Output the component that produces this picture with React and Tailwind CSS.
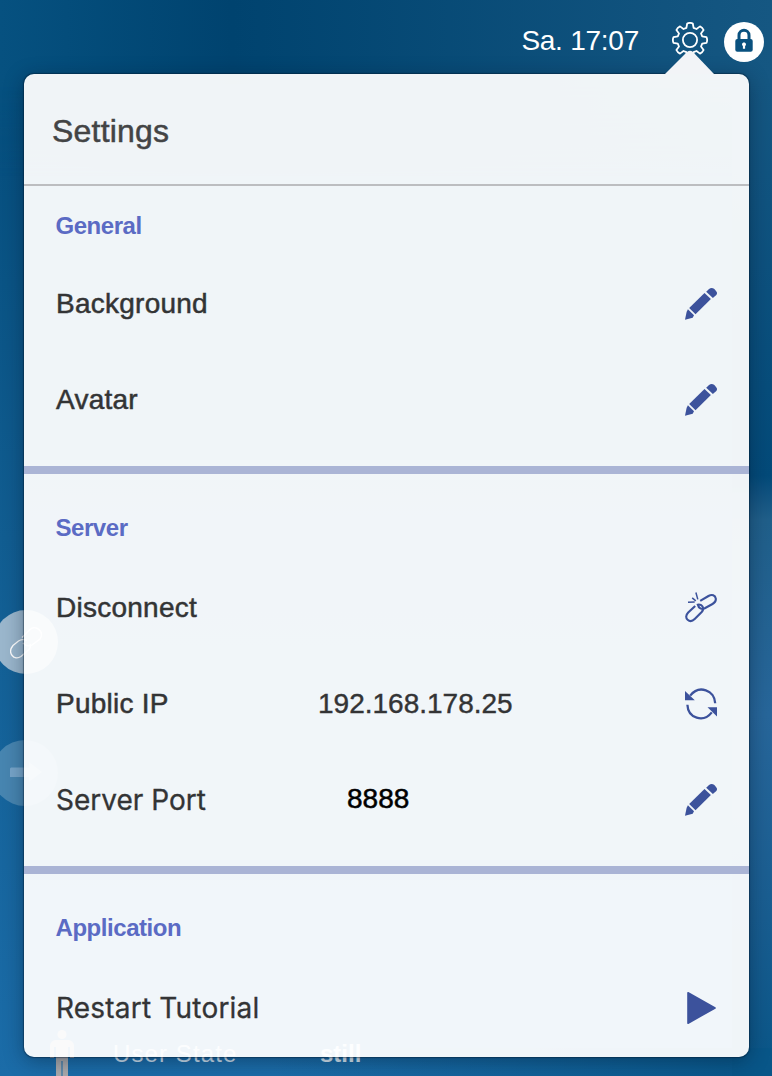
import React from "react";

function Pencil() {
  return (
    <svg className="h-8 w-8 shrink-0" viewBox="0 0 32 32" fill="#3c529c">
      <path d="M4.2 20.1 19.5 4.9 25.9 11 10.5 26.2Z" />
      <path d="M21.2 3.7 24 1Q26.7-1 29.4 1.1L31 2.9Q32.9 5.1 31.3 7L27.9 10.1Z" />
      <path d="M2.9 21.3 9 27.3 7.7 29.8 0 31.7 1.6 24Z" />
    </svg>
  );
}

function BrokenLink() {
  return (
    <svg className="h-8 w-8 shrink-0" viewBox="0 0 32 32" fill="none" stroke="#3c529c" strokeWidth="2.1">
      <path d="M15.2 8.8 23.5 4C27 2 30.3 3.2 30.8 6.6C31.1 9.3 29.8 10.8 27.5 12L19.8 16.2C16.5 17.7 13.6 16.2 13 13" />
      <path d="M10.2 14 3.2 20.6C.6 23.3 .7 26.2 2.6 27.8C4.8 29.7 7.4 29.3 9.7 27L16.7 20C18.9 17.6 18.5 14.6 16.2 13.2Q14 12 11.8 12.9" />
      <path d="M10.9 .5 12.8 7.4M3 10.3 9.7 10.1M7.2 5.8 10.8 8.8" strokeWidth="1.5" />
    </svg>
  );
}

function Refresh() {
  return (
    <svg className="h-8 w-8 shrink-0" viewBox="0 0 32 32" fill="none" stroke="#3c529c" strokeWidth="2.3">
      <path d="M5.2 7.6C14-3.7 29.8 2.2 30.2 15.3" />
      <path d="M2.4 16.8C3 30.5 18.5 35 26.8 24.4" />
      <path d="M0 3V12.3H9.8ZM32 28.5V19.3H22.5Z" fill="#3c529c" stroke="none" />
    </svg>
  );
}

function Play() {
  return (
    <svg className="h-8 w-8 shrink-0" viewBox="0 0 32 32">
      <path d="M3 .8 30 16 3 31.2Z" fill="#3c529c" stroke="#3c529c" strokeWidth="1.6" strokeLinejoin="round" />
    </svg>
  );
}

function Gear() {
  return (
    <svg className="h-9 w-9 shrink-0" viewBox="-18 -18 36 36" fill="none" stroke="#fff" strokeWidth="1.8" strokeLinejoin="round">
      <path d="M-2.8-16.5Q0-17.8 2.8-16.5L3.6-12.2 6.5-11 10-13.6Q12.5-12.5 13.6-10L11-6.5 12.2-3.6 16.5-2.8Q17.8 0 16.5 2.8L12.2 3.6 11 6.5 13.6 10Q12.5 12.5 10 13.6L6.5 11 3.6 12.2 2.8 16.5Q0 17.8-2.8 16.5L-3.6 12.2-6.5 11-10 13.6Q-12.5 12.5-13.6 10L-11 6.5-12.2 3.6-16.5 2.8Q-17.8 0-16.5-2.8L-12.2-3.6-11-6.5-13.6-10Q-12.5-12.5-10-13.6L-6.5-11-3.6-12.2Z" />
      <circle r="7.1" />
    </svg>
  );
}

function Lock() {
  return (
    <div className="flex h-10 w-10 shrink-0 items-center justify-center rounded-full bg-white">
      <svg className="-mt-1 h-6 w-5" viewBox="0 0 20 24">
        <path d="M5 12V7.3C5 .7 15 .7 15 7.3V12" fill="none" stroke="#09517f" strokeWidth="3" />
        <rect x="1.3" y="11" width="17.4" height="12.7" rx="2" fill="#09517f" />
        <path d="M8.9 20.8V18Q7.9 17.2 8 16.2C8.2 13.8 11.8 13.8 12 16.2Q12.1 17.2 11.1 18V20.8Z" fill="#fff" />
      </svg>
    </div>
  );
}

function Row({ label, tone, value, children }) {
  return (
    <div className="flex h-24 items-center pr-8 pl-[31px] text-[28px] text-[#333435]">
      <div className="w-[263px] whitespace-nowrap"><span className={tone}>{label}</span></div>
      <div className="flex-1">{value}</div>
      {children}
    </div>
  );
}

const heading = "pl-[31.5px] text-2xl leading-8 font-bold tracking-[-0.45px] text-[#5b6bc4]";
const label = "relative left-px tracking-[0.25px] [-webkit-text-stroke:0.5px_#333435]";
const wideLabel = "relative left-px font-[Inter,sans-serif] [-webkit-text-stroke:0.3px_#333435]";

export default function App() {
  return (
    <div className="relative isolate h-[1076px] w-[772px] overflow-hidden bg-linear-to-b from-[#034a78] via-[#115d91] to-[#1b6ca8] font-['Liberation_Sans',Arial,sans-serif]">
      <div className="absolute inset-x-0 top-0 -z-20 h-44 bg-linear-to-r from-[#065180] via-[#00436f] via-30% to-[#155782] mask-b-from-45% mask-b-to-100%" />
      <div className="absolute top-20 right-0 -z-20 h-[440px] w-10 bg-linear-to-b from-[#155782] via-[#034a79] via-90% to-[#205f8a]" />
      <div className="absolute top-[520px] right-0 -z-20 h-[556px] w-10 bg-linear-to-b from-[#205f8a] via-[#27669a] via-35% to-[#085688]" />
      <div className="absolute right-0 bottom-0 -z-20 h-7 w-[500px] bg-linear-to-r from-transparent to-[#085688]" />

      <div className="absolute top-[610px] left-[-6px] -z-10 h-16 w-16 rounded-full bg-[#9ab6cc]">
        <svg className="absolute top-[17px] left-4 h-8 w-8" viewBox="0 0 32 32" fill="none" stroke="#fff" strokeWidth="1.3">
          <path d="M12 10.5 20 2.5C25-2.5 35 4 30 12L22 18Q17 20.5 13 16" />
          <path d="M17 13.5Q12 11.5 8.5 14L3 18.5C-3 26 4 34 11 29.5L19 22.5Q21 20.5 20 17" />
        </svg>
      </div>
      <div className="absolute top-[740px] left-[-8px] -z-10 h-[66px] w-[66px] rounded-full bg-[#4785b0]">
        <svg className="absolute top-[17px] left-[18px] h-8 w-8" viewBox="0 0 32 32" fill="#77a5c9">
          <path d="M1 10.5H19V5L32 15 19 25V20H0V11.5Z" />
        </svg>
      </div>
      <svg className="absolute top-[1030px] left-[50px] -z-10 h-[50px] w-6" viewBox="0 0 24 50" fill="#aaa9ab">
        <circle cx="12" cy="4.5" r="4.5" />
        <path d="M5 10H19Q23 11 24 15V28H20V17H18V50H12.5V31H11.5V50H6V17H4V28H0V15Q1 11 5 10Z" />
      </svg>
      <div className="absolute top-[1040px] left-[113px] -z-10 text-2xl leading-7 tracking-[1.1px] text-[#cddfed]">User State</div>
      <div className="absolute top-[1040px] left-[320px] -z-10 text-2xl leading-7 font-bold text-[#dae8f2]">still</div>

      <header className="flex h-[74px] items-start justify-end pr-2">
        <div className="mt-[25px] mr-[33px] text-[28px] leading-8 text-white"><span className="tracking-[-0.25px]">Sa. 17:07</span></div>
        <div className="mt-[22px] mr-4"><Gear /></div>
        <div className="mt-[22px]"><Lock /></div>
      </header>
      <main className="relative ml-6 h-[983px] w-[725px] rounded-[10px] bg-white/94 shadow-[0_0_1px_1px_rgba(0,20,40,0.4),0_4px_20px_rgba(0,20,40,0.4)]">
        <svg className="absolute -top-6 left-[641px] h-6 w-[50px]" viewBox="0 0 50 24">
          <path d="M0 24 22 2Q25-.5 28 2L49 24Z" fill="#f2f4f7" />
        </svg>
        <h1 className="flex h-[112px] items-center border-b-2 border-[#bcbdc0] pt-1 pl-[28px] text-[32px] text-[#434445]"><span className="tracking-[0.2px] [-webkit-text-stroke:0.5px_#434445]">Settings</span></h1>
        <section className="h-[280px] pt-6">
          <h2 className={heading}>General</h2>
          <div className="mt-[14px]">
            <Row label="Background" tone={label}><Pencil /></Row>
            <Row label="Avatar" tone={label}><Pencil /></Row>
          </div>
        </section>
        <section className="h-[400px] border-t-8 border-[#aab4d5] pt-[38px]">
          <h2 className={heading}>Server</h2>
          <div className="mt-4">
            <Row label="Disconnect" tone={label}><BrokenLink /></Row>
            <Row label="Public IP" tone={label} value={<span className="[-webkit-text-stroke:0.4px_#333435]">192.168.178.25</span>}><Refresh /></Row>
            <Row label="Server Port" tone={wideLabel} value={<span className="relative -top-px left-[29px] text-black [-webkit-text-stroke:0.5px_#000]">8888</span>}><Pencil /></Row>
          </div>
        </section>
        <section className="border-t-8 border-[#aab4d5] pt-[38px]">
          <h2 className={heading}>Application</h2>
          <div className="mt-4">
            <Row label="Restart Tutorial" tone="relative left-px font-[Inter,sans-serif] tracking-[0.2px] [-webkit-text-stroke:0.3px_#333435]"><Play /></Row>
          </div>
        </section>
      </main>
    </div>
  );
}
